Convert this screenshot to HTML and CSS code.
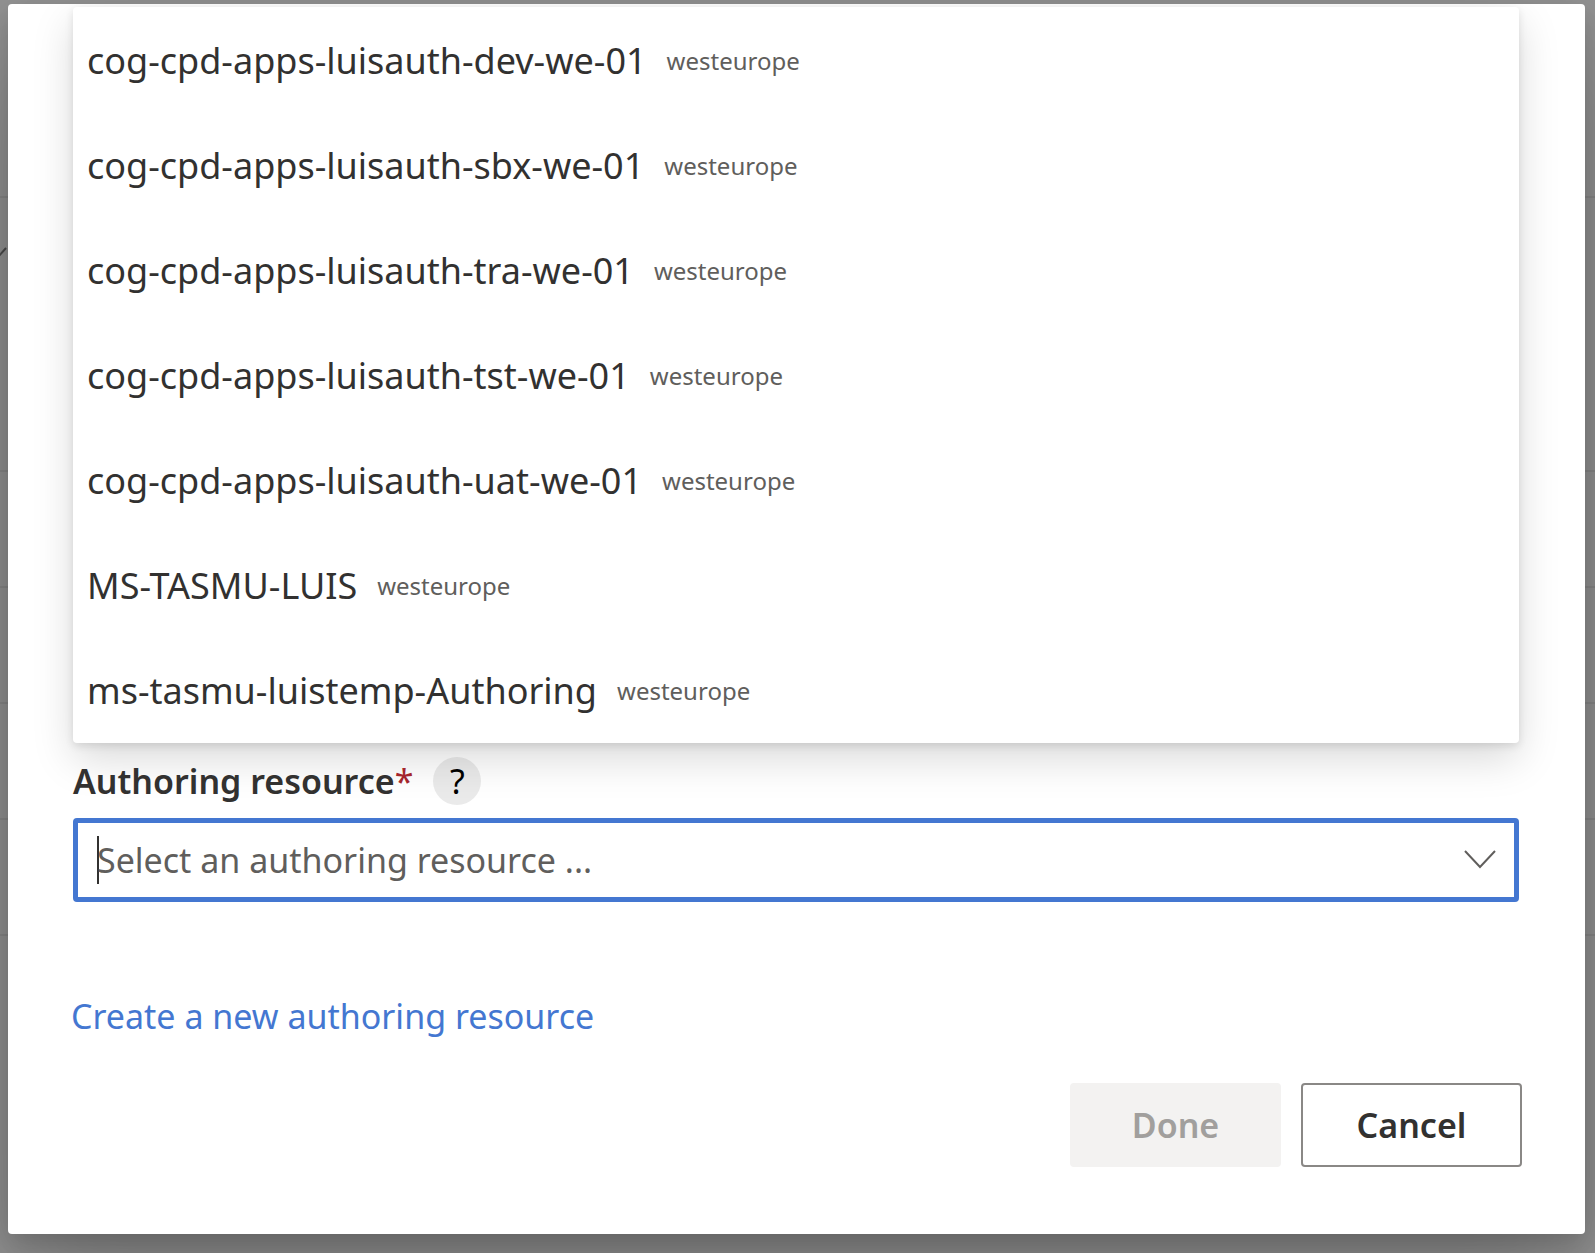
FILE: index.html
```html
<!DOCTYPE html>
<html lang="en">
<head>
<meta charset="utf-8">
<meta name="viewport" content="width=device-width, initial-scale=1">
<title>Authoring resource</title>
<link rel="stylesheet" href="styles.css">
</head>
<body>
<div class="backdrop" aria-hidden="true">
  <div class="backdrop-row backdrop-row-head"></div>
  <div class="backdrop-row backdrop-row-tall">
    <svg class="backdrop-check" viewBox="0 0 8 12" width="8" height="12"><path d="M-2 11 L6 2" fill="none" stroke="#4c4c4c" stroke-width="2"/></svg>
  </div>
  <div class="backdrop-row"></div>
  <div class="backdrop-row"></div>
  <div class="backdrop-row"></div>
  <div class="backdrop-row"></div>
</div>
<main class="dialog" role="dialog" aria-modal="true" aria-labelledby="resource-label">
  <ul class="options" id="resource-options" role="listbox">
    <li class="option" role="option"><span class="option-name">cog-cpd-apps-luisauth-dev-we-01</span><span class="option-region">westeurope</span></li>
    <li class="option" role="option"><span class="option-name">cog-cpd-apps-luisauth-sbx-we-01</span><span class="option-region">westeurope</span></li>
    <li class="option" role="option"><span class="option-name">cog-cpd-apps-luisauth-tra-we-01</span><span class="option-region">westeurope</span></li>
    <li class="option" role="option"><span class="option-name">cog-cpd-apps-luisauth-tst-we-01</span><span class="option-region">westeurope</span></li>
    <li class="option" role="option"><span class="option-name">cog-cpd-apps-luisauth-uat-we-01</span><span class="option-region">westeurope</span></li>
    <li class="option" role="option"><span class="option-name">MS-TASMU-LUIS</span><span class="option-region">westeurope</span></li>
    <li class="option" role="option"><span class="option-name">ms-tasmu-luistemp-Authoring</span><span class="option-region">westeurope</span></li>
  </ul>
  <div class="label-row">
    <label class="label" id="resource-label" for="resource">Authoring resource<span class="required">*</span></label>
    <button class="help" type="button">?</button>
  </div>
  <div class="combo">
    <span class="caret"></span>
    <input class="combo-input" id="resource" type="text" role="combobox" aria-expanded="true" aria-controls="resource-options" placeholder="Select an authoring resource ...">
    <svg class="chevron" viewBox="0 0 32 20" width="32" height="20" aria-hidden="true"><path d="M1 1 L16 17 L31 1" fill="none" stroke="#605e5c" stroke-width="2"/></svg>
  </div>
  <a class="create-link" href="#create">Create a new authoring resource</a>
  <div class="actions">
    <button class="button button-primary" type="button" disabled>Done</button>
    <button class="button" type="button">Cancel</button>
  </div>
</main>
</body>
</html>
```

FILE: styles.css
```css
* {
  box-sizing: border-box;
}

body {
  margin: 0;
  min-height: 100vh;
  display: flex;
  padding: 4px 10px 19px 8px;
  background: #949494;
  color: #323130;
  font-family: "Noto Sans", "Open Sans", sans-serif;
  font-size: 34px;
  line-height: 48px;
}

/* Dimmed page behind the dialog */
.backdrop {
  position: absolute;
  inset: 0;
  overflow: hidden;
}

.backdrop-row {
  height: 116px;
  border-bottom: 2px solid #898989;
}

.backdrop-row-head {
  height: 198px;
}

.backdrop-row-tall {
  height: 274px;
  padding-top: 48px;
}

.backdrop-check {
  display: block;
}

.dialog {
  position: relative;
  flex: 1;
  display: flex;
  flex-direction: column;
  padding: 3px 63px 67px 65px;
  background: #fff;
  border-radius: 4px;
  box-shadow: 0 52px 115px rgba(0, 0, 0, 0.22), 0 10px 28px rgba(0, 0, 0, 0.18);
}

/* Option list */
.options {
  margin: 0 3px 0 0;
  padding: 1px 14px 0;
  list-style: none;
  background: #fff;
  border-radius: 4px;
  box-shadow: 0 16px 42px rgba(0, 0, 0, 0.15), 0 3px 9px rgba(0, 0, 0, 0.11);
  clip-path: inset(-3px -64px -64px -64px);
  font-size: 36px;
}

.option {
  display: flex;
  align-items: center;
  gap: 20px;
  height: 105px;
  padding-top: 1px;
}

.option-region {
  color: #605e5c;
  font-size: 24px;
}

/* Field */
.label-row {
  display: flex;
  align-items: center;
  gap: 20px;
  margin-top: 14px;
  position: relative;
}

.label {
  font-weight: 600;
}

.required {
  color: #a4262c;
  font-weight: 400;
}

.help {
  width: 48px;
  height: 48px;
  padding: 0;
  border: 0;
  border-radius: 50%;
  background: rgba(50, 49, 48, 0.1);
  color: #000;
  font: inherit;
}

.combo {
  display: flex;
  align-items: center;
  height: 84px;
  margin: 13px 3px 0 0;
  padding: 0 18px 0 19px;
  border: 5px solid #4477d1;
  border-radius: 4px;
}

.caret {
  width: 2px;
  height: 48px;
  margin-right: -2px;
  background: #323130;
}

.combo-input {
  flex: 1;
  min-width: 0;
  padding: 0;
  border: 0;
  outline: 0;
  background: none;
  color: #323130;
  font: inherit;
}

.combo-input::placeholder {
  color: #605e5c;
  opacity: 1;
}

.create-link {
  align-self: flex-start;
  margin: 90px 0 0 -2px;
  color: #4477d1;
  text-decoration: none;
}

/* Footer */
.actions {
  display: flex;
  justify-content: flex-end;
  gap: 20px;
  margin-top: 43px;
}

.button {
  min-width: 221px;
  height: 84px;
  padding: 0 24px;
  border: 2px solid #8a8886;
  border-radius: 4px;
  background: #fff;
  color: #323130;
  font: inherit;
  font-weight: 600;
}

.button-primary {
  min-width: 211px;
  border-color: #f3f2f1;
  background: #f3f2f1;
  color: #a19f9d;
}
```
